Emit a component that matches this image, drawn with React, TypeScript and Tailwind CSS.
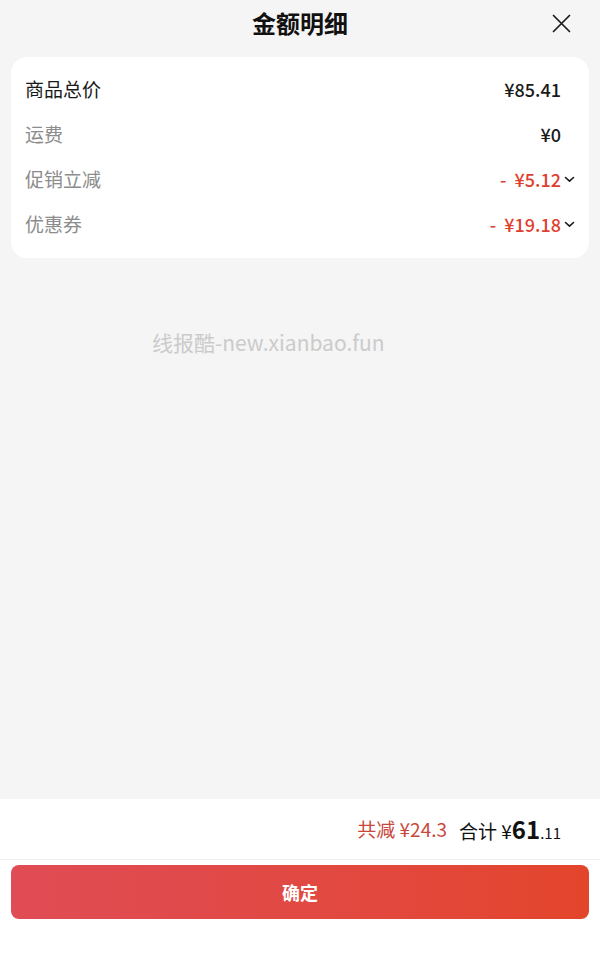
const rows = [
  { label: "商品总价", value: "¥85.41", strong: true, red: false, more: false },
  { label: "运费", value: "¥0", strong: false, red: false, more: false },
  { label: "促销立减", value: "-  ¥5.12", strong: false, red: true, more: true },
  { label: "优惠券", value: "-  ¥19.18", strong: false, red: true, more: true },
];

const Chevron = () => (
  <svg width="11" height="7" viewBox="0 0 11 7" fill="none">
    <path d="M1.5 1.5 L5.5 5.2 L9.5 1.5" stroke="#1a1a1a" strokeWidth="1.6" strokeLinecap="round" strokeLinejoin="round" />
  </svg>
);

const App = () => {
  return (
    <div
      className="w-[600px] h-[966px] bg-[#f5f5f5] flex flex-col overflow-hidden"
      style={{ fontFamily: '"Noto Sans CJK SC", "Noto Sans", sans-serif' }}
    >
      <div className="relative h-[45px] flex items-center justify-center">
        <h1 className="text-[24px] font-bold text-[#111] leading-none">金额明细</h1>
        <button className="absolute right-[28px] top-[12px] w-[22px] h-[22px] flex items-center justify-center">
          <svg width="19" height="19" viewBox="0 0 19 19" fill="none">
            <path d="M1.5 1.5 L17.5 17.5 M17.5 1.5 L1.5 17.5" stroke="#1a1a1a" strokeWidth="1.7" strokeLinecap="round" />
          </svg>
        </button>
      </div>

      <div className="mx-[11px] mt-[12px] rounded-[16px] bg-white pt-[10px] pb-[11px] pl-[14px] pr-[14px]">
        {rows.map((r) => (
          <div key={r.label} className="h-[45px] flex items-center justify-between">
            <span className={`text-[19px] ${r.strong ? "text-[#1a1a1a]" : "text-[#8c8c8c]"}`}>{r.label}</span>
            <div className="flex items-center">
              <span className={`text-[18px] font-medium whitespace-pre ${r.red ? "text-[#df3f2f]" : "text-[#1a1a1a]"}`}>{r.value}</span>
              <span className="w-[14px] flex justify-end">{r.more && <Chevron />}</span>
            </div>
          </div>
        ))}
      </div>

      <div className="flex-1">
        <p className="ml-[152px] mt-[70px] text-[21px] text-[#cbcbcb] leading-[28px]">线报酷-new.xianbao.fun</p>
      </div>

      <div className="bg-white h-[61px] border-b border-[#f0f0f0] flex items-center justify-end pr-[39px] gap-[12px]">
        <span className="text-[19px] text-[#c9473b]">共减 ¥24.3</span>
        <span className="text-[19px] text-[#111] flex items-baseline">
          合计 ¥<span className="text-[24px] font-bold">61</span>
          <span className="text-[15px]">.11</span>
        </span>
      </div>

      <div className="bg-white h-[106px] px-[11px] pt-[5px]">
        <button className="w-full h-[54px] rounded-[8px] bg-gradient-to-r from-[#e04c55] to-[#e3452b] text-white text-[18px] font-bold">
          确定
        </button>
      </div>
    </div>
  );
};

export default App;
